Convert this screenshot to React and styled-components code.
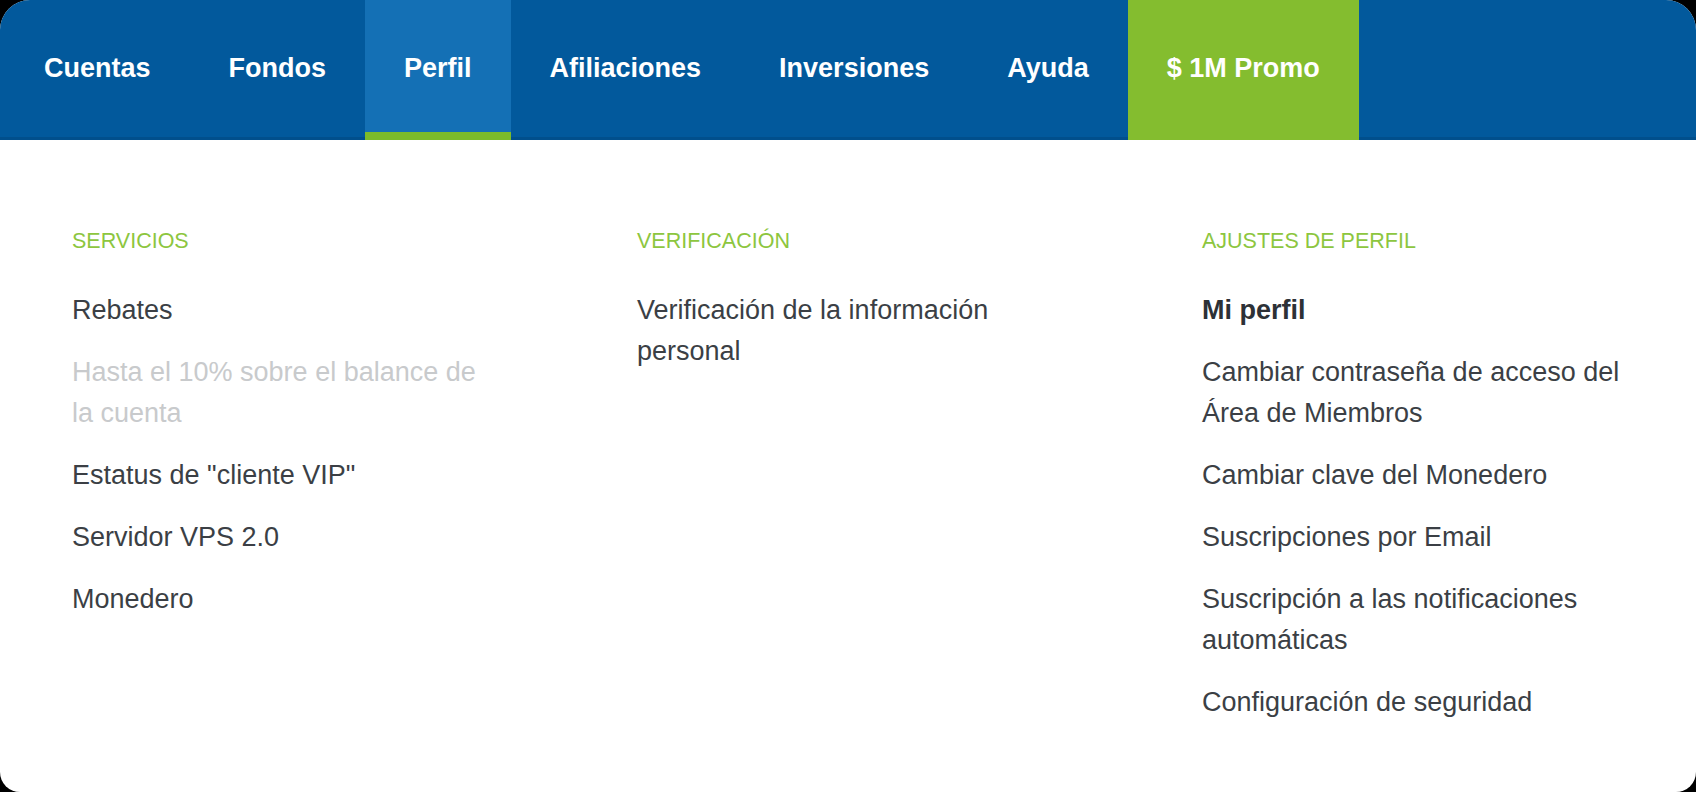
import React from 'react';
import styled, { createGlobalStyle } from 'styled-components';

// Menu data.
const tabs = [
    { label: 'Cuentas' },
    { label: 'Fondos' },
    { label: 'Perfil', active: true },
    { label: 'Afiliaciones' },
    { label: 'Inversiones' },
    { label: 'Ayuda' },
    { label: '$ 1M Promo', promo: true },
];

const columns = [
    {
        title: 'SERVICIOS',
        items: [
            { text: 'Rebates' },
            { text: 'Hasta el 10% sobre el balance de la cuenta', muted: true },
            { text: 'Estatus de "cliente VIP"' },
            { text: 'Servidor VPS 2.0' },
            { text: 'Monedero' },
        ],
    },
    {
        title: 'VERIFICACIÓN',
        items: [
            { text: 'Verificación de la información personal' },
        ],
    },
    {
        title: 'AJUSTES DE PERFIL',
        items: [
            { text: 'Mi perfil', strong: true },
            { text: 'Cambiar contraseña de acceso del Área de Miembros' },
            { text: 'Cambiar clave del Monedero' },
            { text: 'Suscripciones por Email' },
            { text: 'Suscripción a las notificaciones automáticas' },
            { text: 'Configuración de seguridad' },
        ],
    },
];

const App = () => {
    return (
        <>
            <GlobalStyle />
            <Card>
                <Nav>
                    {tabs.map((tab) => (
                        <Tab key={tab.label} $active={tab.active} $promo={tab.promo}>
                            {tab.label}
                        </Tab>
                    ))}
                </Nav>

                <Dropdown>
                    {columns.map((col) => (
                        <Column key={col.title}>
                            <ColumnTitle>{col.title}</ColumnTitle>
                            <ItemList>
                                {col.items.map((item) => (
                                    <Item key={item.text} $muted={item.muted} $strong={item.strong}>
                                        {item.text}
                                    </Item>
                                ))}
                            </ItemList>
                        </Column>
                    ))}
                </Dropdown>
            </Card>
        </>
    );
};

// Global.
const GlobalStyle = createGlobalStyle`
    html, body {
        margin: 0;
        padding: 0;
        background: #000;
    }
    body {
        font-family: "Liberation Sans", Arial, sans-serif;
    }
`;

// Card.
const Card = styled.div`
    height: 100vh;
    overflow: hidden;
    background: #fff;
    border-radius: 30px 30px 20px 20px;
    display: flex;
    flex-direction: column;
`;

// Top nav.
const Nav = styled.nav`
    display: flex;
    align-items: stretch;
    height: 140px;
    padding-left: 5px;
    background: #02599c;
    box-shadow: inset 0 -3px 0 rgba(0, 0, 0, 0.1);
`;

const Tab = styled.a`
    display: flex;
    align-items: center;
    box-sizing: border-box;
    padding: 4px 39px 0;
    font-size: 27px;
    font-weight: 700;
    color: #fff;
    text-decoration: none;
    cursor: pointer;
    background: ${(p) => (p.$promo ? '#84bd2f' : p.$active ? '#1470b5' : 'transparent')};
    border-bottom: 8px solid ${(p) => (p.$active ? '#7cbb2a' : 'transparent')};
    ${(p) => p.$promo && 'border-bottom-color: #84bd2f;'}
`;

// Dropdown panel.
const Dropdown = styled.div`
    display: grid;
    grid-template-columns: 565px 565px 1fr;
    padding: 88px 0 0 72px;
`;

const Column = styled.div`
    display: flex;
    flex-direction: column;
`;

const ColumnTitle = styled.div`
    font-size: 21.5px;
    line-height: 26px;
    color: #8dc63f;
    margin-bottom: 36px;
`;

const ItemList = styled.div`
    display: flex;
    flex-direction: column;
    gap: 21px;
`;

const Item = styled.a`
    max-width: 425px;
    font-size: 27px;
    line-height: 41px;
    font-weight: ${(p) => (p.$strong ? 700 : 400)};
    color: ${(p) => (p.$muted ? '#c8cacc' : p.$strong ? '#2d3136' : '#3b3f45')};
    cursor: ${(p) => (p.$muted ? 'default' : 'pointer')};
`;

export default App;
